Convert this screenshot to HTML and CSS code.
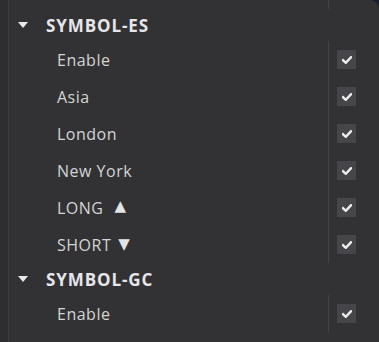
FILE: index.html
```html
<!DOCTYPE html>
<html>
<head>
<meta charset="utf-8">
<link rel="stylesheet" href="styles.css">
</head>
<body>
<div class="panel">
  <div class="gutter"></div>
  <div class="tree">
    <div class="row item stub"><span class="label"></span><span class="ctl"></span></div>

    <div class="row group"><span class="caret"></span><span class="gtitle">SYMBOL-ES</span></div>
    <div class="row item"><span class="label">Enable</span><span class="ctl"><span class="cb"><svg viewBox="0 0 10 8" width="10" height="8"><path d="M1 4.2 L3.8 6.8 L9 1.2" /></svg></span></span></div>
    <div class="row item"><span class="label">Asia</span><span class="ctl"><span class="cb"><svg viewBox="0 0 10 8" width="10" height="8"><path d="M1 4.2 L3.8 6.8 L9 1.2" /></svg></span></span></div>
    <div class="row item"><span class="label">London</span><span class="ctl"><span class="cb"><svg viewBox="0 0 10 8" width="10" height="8"><path d="M1 4.2 L3.8 6.8 L9 1.2" /></svg></span></span></div>
    <div class="row item"><span class="label">New York</span><span class="ctl"><span class="cb"><svg viewBox="0 0 10 8" width="10" height="8"><path d="M1 4.2 L3.8 6.8 L9 1.2" /></svg></span></span></div>
    <div class="row item"><span class="label">LONG<span class="arrow up">▲</span></span><span class="ctl"><span class="cb"><svg viewBox="0 0 10 8" width="10" height="8"><path d="M1 4.2 L3.8 6.8 L9 1.2" /></svg></span></span></div>
    <div class="row item"><span class="label">SHORT<span class="arrow down">▼</span></span><span class="ctl"><span class="cb"><svg viewBox="0 0 10 8" width="10" height="8"><path d="M1 4.2 L3.8 6.8 L9 1.2" /></svg></span></span></div>

    <div class="row group"><span class="caret"></span><span class="gtitle">SYMBOL-GC</span></div>
    <div class="row item"><span class="label">Enable</span><span class="ctl"><span class="cb"><svg viewBox="0 0 10 8" width="10" height="8"><path d="M1 4.2 L3.8 6.8 L9 1.2" /></svg></span></span></div>
  </div>
</div>
</body>
</html>
```
FILE: styles.css
```css
html, body {
  margin: 0;
  padding: 0;
  background: #1a2030;
}
body {
  width: 379px;
  height: 342px;
  overflow: hidden;
  font-family: "Open Sans", "Noto Sans", sans-serif;
}
.panel {
  display: flex;
  height: 342px;
  background: #323234;
  border-top-right-radius: 9px;
  overflow: hidden;
}
.gutter {
  width: 8px;
  background: #2e2e30;
  border-right: 1px solid #3c3c3f;
  flex: none;
}
.tree {
  flex: 1;
  display: flex;
  flex-direction: column;
}
.row {
  display: flex;
  align-items: center;
  flex: none;
}
.item {
  height: 37px;
}
.item.stub {
  height: 9px;
}
.label {
  flex: 1;
  padding-left: 48px;
  color: #d4d4d4;
  font-size: 16px;
  letter-spacing: 0.5px;
  display: flex;
  align-items: center;
}
.arrow {
  font-family: "DejaVu Sans", sans-serif;
  font-size: 15px;
  line-height: 1;
  letter-spacing: 0;
  color: #e4e4e4;
}
.arrow.up {
  margin-left: 11px;
  margin-top: -2px;
}
.arrow.down {
  margin-left: 7px;
}
.ctl {
  align-self: stretch;
  width: 50px;
  border-left: 1px solid #444447;
  display: flex;
  align-items: center;
}
.cb {
  margin-left: 8px;
  width: 19px;
  height: 19px;
  background: #45454a;
  display: flex;
  align-items: center;
  justify-content: center;
}
.cb svg path {
  fill: none;
  stroke: #ececec;
  stroke-width: 2.4;
  stroke-linecap: square;
}
.group {
  height: 32px;
}
.caret {
  width: 0;
  height: 0;
  margin-left: 9px;
  border-left: 5.5px solid transparent;
  border-right: 5.5px solid transparent;
  border-top: 6px solid #e8e8e8;
}
.gtitle {
  margin-left: 18px;
  color: #e6e6ea;
  font-weight: 700;
  font-size: 17px;
  letter-spacing: 0.9px;
}
```
